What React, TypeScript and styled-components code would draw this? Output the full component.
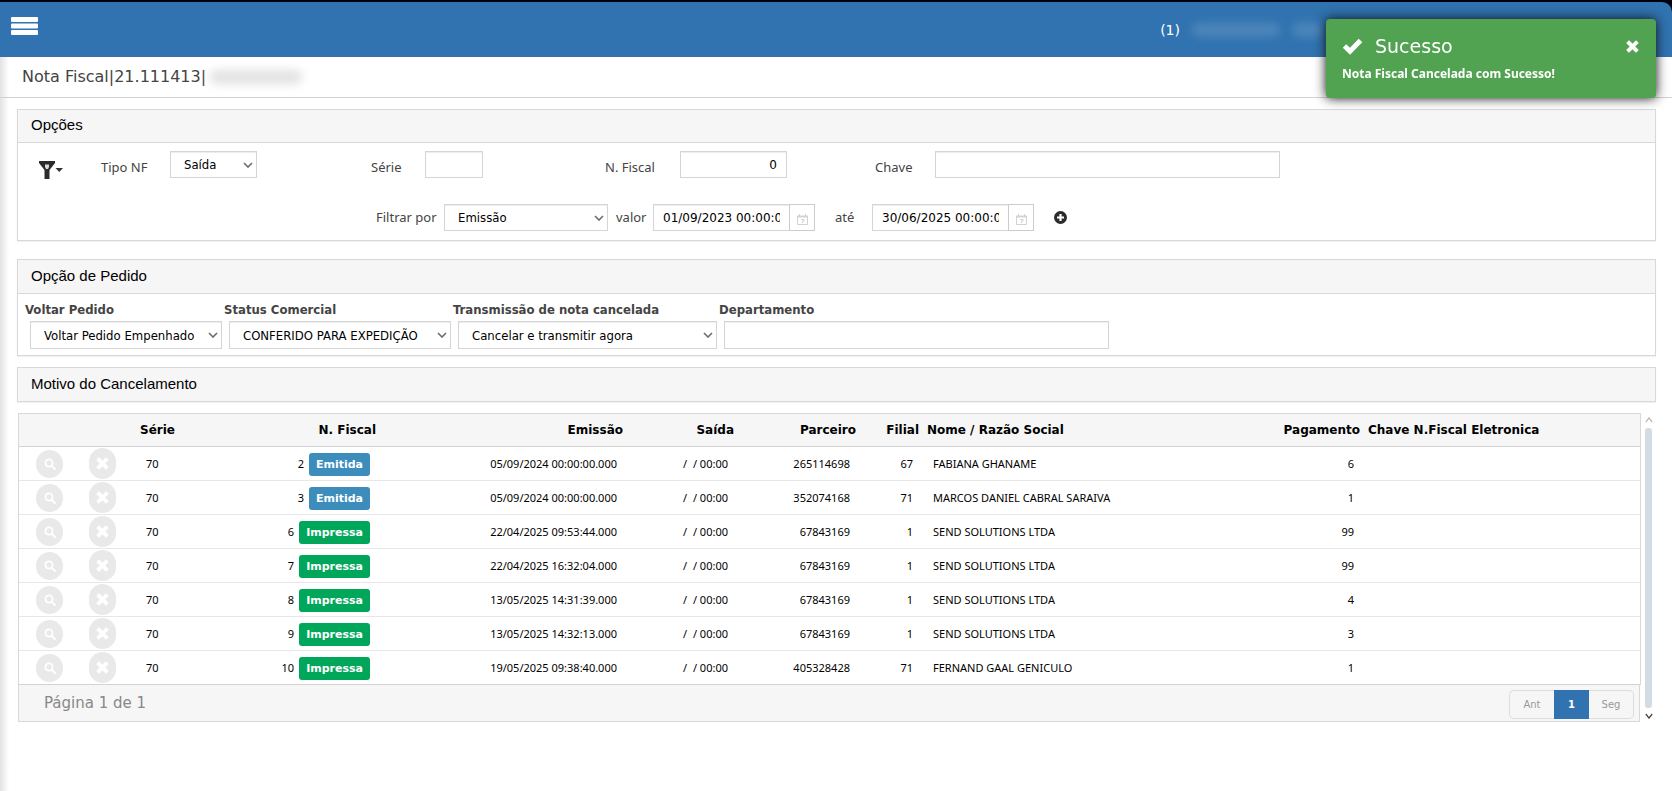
import React from "react";
import styled, { createGlobalStyle } from "styled-components";

const verdana = '"DejaVu Sans", Verdana, sans-serif';
const tahoma = '"DejaVu Sans Condensed", Tahoma, sans-serif';
const trebuchet = '"Noto Sans", "Trebuchet MS", sans-serif';
const arial = '"Liberation Sans", Arial, sans-serif';

const GlobalStyle = createGlobalStyle`
  *, *::before, *::after { box-sizing: border-box; }
  body { margin: 0; background: #fff; color: #000; font-family: ${verdana}; }
  button { margin: 0; padding: 0; border: 0; background: none; color: inherit; font-family: inherit; cursor: pointer; }
  svg { display: block; }
`;

const Page = styled.div`
  min-height: 100vh;
  display: flex;
  flex-direction: column;
`;

const TopFrame = styled.div`
  background: #00000f;
  padding-top: 2px;
`;

const TopBar = styled.header`
  height: 55px;
  padding: 0 348px 0 11px;
  display: flex;
  align-items: center;
  justify-content: space-between;
  background: #3073b0;
  border-top-right-radius: 10px;
  color: #fff;
`;

const MenuButton = styled.button`
  margin-bottom: 7px;
`;

const UserInfo = styled.div`
  display: flex;
  align-items: center;
  gap: 12px;
  font-size: 14px;
`;

const Redacted = styled.span<{ $width: number; $color: string }>`
  width: ${(p) => p.$width}px;
  height: 14px;
  border-radius: 6px;
  background: ${(p) => p.$color};
  filter: blur(5px);
`;

const Main = styled.main`
  flex: 1;
  background: linear-gradient(to right, #e2e2e2, #fff 9px);
`;

const TitleBar = styled.div`
  height: 41px;
  padding: 0 22px;
  display: flex;
  align-items: center;
  gap: 4px;
  border-bottom: 1px solid #d3d3d3;
`;

const PageTitle = styled.h1`
  margin: 0;
  font-size: 16px;
  font-weight: 400;
  line-height: 20px;
  color: #444;
`;

const Content = styled.div`
  padding: 11px 16px 40px 17px;
`;

const Panel = styled.section<{ $gap: number }>`
  margin-bottom: ${(p) => p.$gap}px;
  border: 1px solid #d8d8d8;
  background: #fff;
  box-shadow: 0 1px 1px rgba(0, 0, 0, 0.05);
`;

const PanelTitle = styled.h2<{ $height?: number }>`
  margin: 0;
  height: ${(p) => p.$height ?? 33}px;
  padding: 0 13px 2px;
  display: flex;
  align-items: center;
  background: #f6f6f6;
  font: 400 15px/20px ${arial};
`;

const PanelBody = styled.div`
  border-top: 1px solid #d8d8d8;
`;

const Filters = styled(PanelBody)`
  padding: 8px 20px 9px 21px;
  display: flex;
  gap: 38px;
`;

const FilterMenu = styled.button`
  align-self: flex-start;
  margin-top: 10px;
`;

const FilterRows = styled.div`
  flex: 1;
  display: flex;
  flex-direction: column;
  gap: 26px;
`;

const FilterRow = styled.div<{ $indent?: number }>`
  display: flex;
  align-items: center;
  padding-left: ${(p) => p.$indent ?? 0}px;
`;

const Field = styled.div<{ $width: number; $label: number; $drop?: boolean }>`
  width: ${(p) => p.$width}px;
  display: flex;
  align-items: center;

  & > label {
    width: ${(p) => p.$label}px;
    padding: ${(p) => (p.$drop ? "5px 0 0" : "0 0 2px")};
    flex: none;
    font: 13px/18px ${trebuchet};
    color: #444;
  }
`;

const TextBox = styled.input<{ $width: number; $height?: number }>`
  width: ${(p) => p.$width}px;
  height: ${(p) => p.$height ?? 27}px;
  padding: 0 9px;
  border: 1px solid #d5d5d5;
  border-radius: 0;
  outline: 0;
  background: #fff;
  box-shadow: inset 0 1px 1px rgba(0, 0, 0, 0.075);
  font: 12px ${verdana};
  color: #000;
`;

const NumberBox = styled(TextBox)`
  text-align: right;
`;

const SelectWrap = styled.div<{ $width: number }>`
  position: relative;
  width: ${(p) => p.$width}px;

  & > svg {
    position: absolute;
    top: 11px;
    right: 4px;
    pointer-events: none;
  }
`;

const SelectBox = styled.select<{ $height?: number }>`
  appearance: none;
  width: 100%;
  height: ${(p) => p.$height ?? 27}px;
  padding: 0 18px 0 13px;
  display: block;
  border: 1px solid #d5d5d5;
  border-radius: 0;
  outline: 0;
  background: #fff;
  box-shadow: inset 0 1px 1px rgba(0, 0, 0, 0.075);
  font: 13px ${tahoma};
  color: #000;
`;

const DateGroup = styled.div`
  display: flex;
`;

const DateButton = styled.button`
  width: 26px;
  margin-left: -1px;
  padding-top: 4px;
  display: flex;
  align-items: center;
  justify-content: center;
  border: 1px solid #ccc;
`;

const OrderFields = styled(PanelBody)`
  padding: 6px 8px 6px 7px;
  display: flex;
  gap: 2px;
`;

const OrderField = styled.div`
  padding-left: 5px;

  & > label {
    display: block;
    margin-left: -5px;
    padding-bottom: 1px;
    font: bold 13px/20px ${tahoma};
    color: #444;
  }
`;

const GridArea = styled.div`
  margin: 0 4px 0 1px;
  display: flex;
  gap: 4px;
`;

const GridColumn = styled.div`
  flex: 1;
  min-width: 0;
`;

const Table = styled.table`
  width: 100%;
  table-layout: fixed;
  border: 1px solid #d8d8d8;
  border-bottom: 0;
  border-spacing: 0;
`;

const Th = styled.th<{ $right?: boolean }>`
  height: 33px;
  padding: 0 4px;
  border-bottom: 1px solid #d3d3d3;
  background: #f6f6f6;
  font: bold 12px/16px ${verdana};
  text-align: ${(p) => (p.$right ? "right" : "left")};
  white-space: nowrap;
`;

const Td = styled.td<{ $right?: boolean }>`
  height: 34px;
  padding: 1px 10px 0;
  font: 11px/16px ${trebuchet};
  text-align: ${(p) => (p.$right ? "right" : "left")};
  white-space: nowrap;
`;

const ActionCell = styled.td<{ $left: number }>`
  padding: 0 0 0 ${(p) => p.$left}px;
`;

const Row = styled.tr`
  & > td { border-bottom: 1px solid #e7e7e7; }
  &:last-child > td { border-bottom-color: #d3d3d3; }
`;

const RoundButton = styled.button<{ $height: number }>`
  width: 27px;
  height: ${(p) => p.$height}px;
  display: flex;
  align-items: center;
  justify-content: center;
  border-radius: 14px;
  background: #e9e9e9;
`;

const InvoiceNumber = styled.div`
  display: flex;
  align-items: center;
  justify-content: flex-end;
  gap: 5px;
`;

const Badge = styled.span<{ $color: string }>`
  height: 23px;
  padding: 0 7px;
  border-radius: 3px;
  background: ${(p) => p.$color};
  font: bold 11px/23px ${verdana};
  color: #fff;
`;

const GridFooter = styled.div`
  height: 37px;
  margin-right: 1px;
  padding: 0 5px 0 25px;
  display: flex;
  align-items: center;
  justify-content: space-between;
  border: 1px solid #d8d8d8;
  border-top: 0;
  background: #f6f6f6;
`;

const PageCount = styled.span`
  font-size: 15px;
  line-height: 20px;
  color: #888;
`;

const Pager = styled.nav`
  margin-top: 3px;
  height: 29px;
  display: flex;
`;

const PagerButton = styled.button<{ $active?: boolean }>`
  width: ${(p) => (p.$active ? 35 : 45)}px;
  border: 1px solid ${(p) => (p.$active ? "#3073b0" : "#ddd")};
  background: ${(p) => (p.$active ? "#3073b0" : "transparent")};
  color: ${(p) => (p.$active ? "#fff" : "#999")};
  font-size: 10px;
  font-weight: ${(p) => (p.$active ? 700 : 400)};

  &:first-child { border-right: 0; border-radius: 5px 0 0 5px; }
  &:last-child { border-left: 0; border-radius: 0 5px 5px 0; }
`;

const ScrollTrack = styled.div`
  width: 7px;
  padding: 4px 0 3px;
  display: flex;
  flex-direction: column;
  align-items: center;
  gap: 5px;
`;

const ScrollThumb = styled.div`
  flex: 1;
  width: 7px;
  border-radius: 3px;
  background: #d2dce4;
`;

const Toast = styled.div`
  position: fixed;
  top: 19px;
  right: 16px;
  width: 330px;
  height: 79px;
  padding: 15px 17px 0 16px;
  border-radius: 4px;
  background: #51a351;
  box-shadow: 0 0 12px #111;
  color: #fff;
`;

const ToastHead = styled.div`
  display: flex;
  align-items: center;
  gap: 12px;
`;

const ToastTitle = styled.strong`
  flex: 1;
  font-size: 19px;
  font-weight: 400;
  line-height: 24px;
`;

const ToastText = styled.p`
  margin: 7px 0 0;
  font: bold 12px/18px ${trebuchet};
`;

const Chevron = ({ up, color = "#6b6b6b", width = 10 }: { up?: boolean; color?: string; width?: number }) => (
  <svg width={width} height="6" viewBox="0 0 10 6" fill="none" stroke={color} strokeWidth="1.600" preserveAspectRatio="none">
    <path d={up ? "M1 5 5 1 9 5" : "M1 1 5 5 9 1"} />
  </svg>
);

const CalendarIcon = () => (
  <svg width="11" height="11" viewBox="0 0 11 11" fill="none" stroke="#d2d2d2">
    <path d="M.5 3v7.500h10V3" />
    <path d="M0 2.500h11" strokeWidth="2" />
    <path d="M2.500 0v2M8.500 0v2" />
    <path d="M4 5.500h3v1.500H5.500v2" />
  </svg>
);

const CrossIcon = ({ size }: { size: number }) => (
  <svg width={size} height={size} viewBox="0 0 14 14" stroke="#fff" strokeWidth="4.200" strokeLinecap="square">
    <path d="M3.200 3.200 10.800 10.800M10.800 3.200 3.200 10.800" />
  </svg>
);

const SearchIcon = () => (
  <svg width="12" height="12" viewBox="0 0 12 12" fill="none" stroke="#fff" strokeWidth="1.800" strokeLinecap="round">
    <circle cx="5" cy="5" r="3.600" />
    <path d="M7.800 7.800 11 11" />
  </svg>
);

type SelectProps = { id: string; width: number; height?: number; value: string };

const Select = ({ id, width, height, value }: SelectProps) => (
  <SelectWrap $width={width}>
    <SelectBox id={id} $height={height} defaultValue={value}>
      <option>{value}</option>
    </SelectBox>
    <Chevron />
  </SelectWrap>
);

const DateBox = ({ id, value }: { id: string; value: string }) => (
  <DateGroup>
    <TextBox id={id} $width={137} defaultValue={value} />
    <DateButton type="button" aria-label="Abrir calendário">
      <CalendarIcon />
    </DateButton>
  </DateGroup>
);

type Status = "Emitida" | "Impressa";
const statusColor: Record<Status, string> = { Emitida: "#3c8dbc", Impressa: "#00a65a" };

const invoices: [number, Status, string, string, number, string, number][] = [
  [2, "Emitida", "05/09/2024 00:00:00.000", "265114698", 67, "FABIANA GHANAME", 6],
  [3, "Emitida", "05/09/2024 00:00:00.000", "352074168", 71, "MARCOS DANIEL CABRAL SARAIVA", 1],
  [6, "Impressa", "22/04/2025 09:53:44.000", "67843169", 1, "SEND SOLUTIONS LTDA", 99],
  [7, "Impressa", "22/04/2025 16:32:04.000", "67843169", 1, "SEND SOLUTIONS LTDA", 99],
  [8, "Impressa", "13/05/2025 14:31:39.000", "67843169", 1, "SEND SOLUTIONS LTDA", 4],
  [9, "Impressa", "13/05/2025 14:32:13.000", "67843169", 1, "SEND SOLUTIONS LTDA", 3],
  [10, "Impressa", "19/05/2025 09:38:40.000", "405328428", 71, "FERNAND GAAL GENICULO", 1],
];

const columnWidths = [61, 56, 84, 160, 247, 111, 122, 63, 341, 100];

export default function App() {
  return (
    <Page>
      <GlobalStyle />
      <TopFrame>
        <TopBar>
          <MenuButton type="button" aria-label="Menu">
            <svg width="27" height="18" viewBox="0 0 27 18" fill="#fff">
              <rect width="27" height="5" rx="1" />
              <rect y="6.500" width="27" height="5" rx="1" />
              <rect y="13" width="27" height="5" rx="1" />
            </svg>
          </MenuButton>
          <UserInfo>
            <span>(1)</span>
            <Redacted $width={88} $color="#4d86bb" />
            <Redacted $width={32} $color="#4d86bb" />
          </UserInfo>
        </TopBar>
      </TopFrame>

      <Main>
        <TitleBar>
          <PageTitle>Nota Fiscal|21.111413|</PageTitle>
          <Redacted $width={92} $color="#e2e2e2" />
        </TitleBar>

        <Content>
          <Panel $gap={18}>
            <PanelTitle $height={32}>Opções</PanelTitle>
            <Filters>
              <FilterMenu type="button" aria-label="Filtros">
                <svg width="24" height="18" viewBox="0 0 24 18">
                  <path d="M0 0h16v2l-5.500 7V18h-5V9L0 2z" fill="#2b2b2b" />
                  <path d="M6 3.500h4V6L9 8H7L6 6z" fill="#d9d9d9" />
                  <path d="M16.500 7h7.500l-3.750 4z" fill="#333" />
                </svg>
              </FilterMenu>
              <FilterRows>
                <FilterRow>
                  <Field $width={270} $label={69} $drop>
                    <label htmlFor="tipo">Tipo NF</label>
                    <Select id="tipo" width={87} value="Saída" />
                  </Field>
                  <Field $width={234} $label={54} $drop>
                    <label htmlFor="serie">Série</label>
                    <TextBox id="serie" $width={58} />
                  </Field>
                  <Field $width={270} $label={75} $drop>
                    <label htmlFor="fiscal">N. Fiscal</label>
                    <NumberBox id="fiscal" $width={107} defaultValue="0" />
                  </Field>
                  <Field $width={405} $label={60} $drop>
                    <label htmlFor="chave">Chave</label>
                    <TextBox id="chave" $width={345} />
                  </Field>
                </FilterRow>
                <FilterRow $indent={275}>
                  <Field $width={240} $label={68}>
                    <label htmlFor="filtrar">Filtrar por</label>
                    <Select id="filtrar" width={164} value="Emissão" />
                  </Field>
                  <Field $width={219} $label={37}>
                    <label htmlFor="de">valor</label>
                    <DateBox id="de" value="01/09/2023 00:00:00" />
                  </Field>
                  <Field $width={219} $label={37}>
                    <label htmlFor="ate">até</label>
                    <DateBox id="ate" value="30/06/2025 00:00:00" />
                  </Field>
                  <button type="button" aria-label="Adicionar filtro">
                    <svg width="13" height="13" viewBox="0 0 13 13">
                      <circle cx="6.500" cy="6.500" r="6.500" fill="#2b2b2b" />
                      <path d="M6.500 3v7M3 6.500h7" stroke="#fff" strokeWidth="2.200" />
                    </svg>
                  </button>
                </FilterRow>
              </FilterRows>
            </Filters>
          </Panel>

          <Panel $gap={11}>
            <PanelTitle>Opção de Pedido</PanelTitle>
            <OrderFields>
              <OrderField>
                <label htmlFor="voltar">Voltar Pedido</label>
                <Select id="voltar" width={192} height={28} value="Voltar Pedido Empenhado" />
              </OrderField>
              <OrderField>
                <label htmlFor="status">Status Comercial</label>
                <Select id="status" width={222} height={28} value="CONFERIDO PARA EXPEDIÇÃO" />
              </OrderField>
              <OrderField>
                <label htmlFor="transmissao">Transmissão de nota cancelada</label>
                <Select id="transmissao" width={259} height={28} value="Cancelar e transmitir agora" />
              </OrderField>
              <OrderField>
                <label htmlFor="departamento">Departamento</label>
                <TextBox id="departamento" $width={385} $height={28} />
              </OrderField>
            </OrderFields>
          </Panel>

          <Panel $gap={11}>
            <PanelTitle>Motivo do Cancelamento</PanelTitle>
          </Panel>

          <GridArea>
            <GridColumn>
              <Table>
                <colgroup>
                  {columnWidths.map((width, i) => (
                    <col key={i} width={width} />
                  ))}
                  <col />
                </colgroup>
                <thead>
                  <tr>
                    <Th />
                    <Th />
                    <Th>Série</Th>
                    <Th $right>N. Fiscal</Th>
                    <Th $right>Emissão</Th>
                    <Th $right>Saída</Th>
                    <Th $right>Parceiro</Th>
                    <Th $right>Filial</Th>
                    <Th>Nome / Razão Social</Th>
                    <Th $right>Pagamento</Th>
                    <Th>Chave N.Fiscal Eletronica</Th>
                  </tr>
                </thead>
                <tbody>
                  {invoices.map(([number, status, issued, partner, branch, name, payment]) => (
                    <Row key={number}>
                      <ActionCell $left={17}>
                        <RoundButton type="button" $height={28} aria-label="Visualizar">
                          <SearchIcon />
                        </RoundButton>
                      </ActionCell>
                      <ActionCell $left={9}>
                        <RoundButton type="button" $height={31} aria-label="Cancelar">
                          <CrossIcon size={13} />
                        </RoundButton>
                      </ActionCell>
                      <Td>70</Td>
                      <Td $right>
                        <InvoiceNumber>
                          {number}
                          <Badge $color={statusColor[status]}>{status}</Badge>
                        </InvoiceNumber>
                      </Td>
                      <Td $right>{issued}</Td>
                      <Td $right>/ &nbsp;/ 00:00</Td>
                      <Td $right>{partner}</Td>
                      <Td $right>{branch}</Td>
                      <Td>{name}</Td>
                      <Td $right>{payment}</Td>
                      <Td />
                    </Row>
                  ))}
                </tbody>
              </Table>
              <GridFooter>
                <PageCount>Página 1 de 1</PageCount>
                <Pager aria-label="Paginação">
                  <PagerButton type="button">Ant</PagerButton>
                  <PagerButton type="button" $active>1</PagerButton>
                  <PagerButton type="button">Seg</PagerButton>
                </Pager>
              </GridFooter>
            </GridColumn>
            <ScrollTrack>
              <Chevron up color="#bbb" width={8} />
              <ScrollThumb />
              <Chevron color="#444" width={8} />
            </ScrollTrack>
          </GridArea>
        </Content>
      </Main>

      <Toast role="status">
        <ToastHead>
          <svg width="21" height="17" viewBox="0 0 21 17" fill="none" stroke="#fff" strokeWidth="5">
            <path d="M2.500 8 8 13.200 18.500 2.500" />
          </svg>
          <ToastTitle>Sucesso</ToastTitle>
          <button type="button" aria-label="Fechar">
            <CrossIcon size={13} />
          </button>
        </ToastHead>
        <ToastText>Nota Fiscal Cancelada com Sucesso!</ToastText>
      </Toast>
    </Page>
  );
}
